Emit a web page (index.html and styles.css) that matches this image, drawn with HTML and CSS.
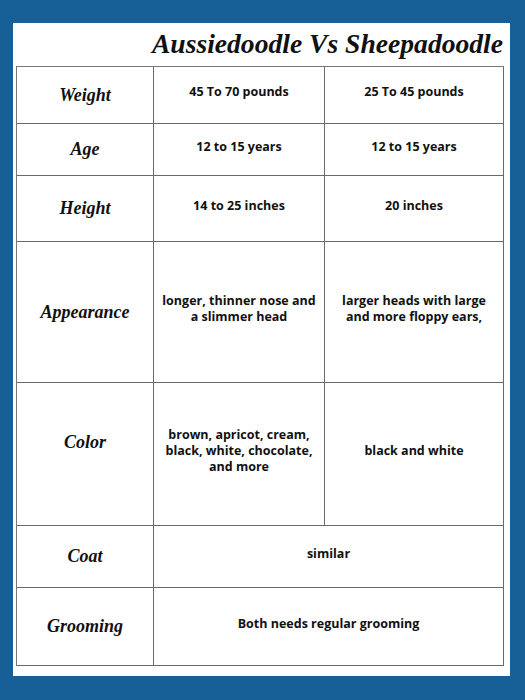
FILE: index.html
```html
<!DOCTYPE html>
<html>
<head>
<meta charset="utf-8">
<link rel="stylesheet" href="styles.css">
</head>
<body>
<div class="page">
  <h1 class="title">Aussiedoodle Vs Sheepadoodle</h1>
  <div class="table">
    <div class="cell label">Weight</div>
    <div class="cell value">45 To 70 pounds</div>
    <div class="cell value">25 To 45 pounds</div>

    <div class="cell label">Age</div>
    <div class="cell value">12 to 15 years</div>
    <div class="cell value">12 to 15 years</div>

    <div class="cell label">Height</div>
    <div class="cell value">14 to 25 inches</div>
    <div class="cell value">20 inches</div>

    <div class="cell label">Appearance</div>
    <div class="cell value">longer, thinner nose and<br>a slimmer head</div>
    <div class="cell value">larger heads with large<br>and more floppy ears,</div>

    <div class="cell label label--high">Color</div>
    <div class="cell value">brown, apricot, cream,<br>black, white, chocolate,<br>and more</div>
    <div class="cell value">black and white</div>

    <div class="cell label">Coat</div>
    <div class="cell value span">similar</div>

    <div class="cell label">Grooming</div>
    <div class="cell value span">Both needs regular grooming</div>
  </div>
</div>
</body>
</html>
```
FILE: styles.css
```css
html, body {
  margin: 0;
  padding: 0;
}
body {
  background: #165f97;
  width: 525px;
  height: 700px;
  overflow: hidden;
}
.page {
  margin: 23px 0 0 13px;
  width: 497px;
  height: 653px;
  background: #ffffff;
  box-sizing: border-box;
  padding-left: 3px;
}
.title {
  margin: 0;
  height: 43px;
  box-sizing: border-box;
  padding: 6px 7px 0 0;
  text-align: right;
  font-family: "Liberation Serif", serif;
  font-style: italic;
  font-weight: bold;
  font-size: 27.6px;
  line-height: 30px;
  color: #111;
}
.table {
  display: grid;
  grid-template-columns: 137px 171px 179px;
  grid-template-rows: 57px 52px 66px 141px 143px 62px 78px;
  width: 488px;
  box-sizing: border-box;
  border-top: 1px solid #777;
  border-left: 1px solid #777;
}
.cell {
  box-sizing: border-box;
  border-right: 1px solid #6a6a6a;
  border-bottom: 1px solid #6a6a6a;
  display: flex;
  align-items: center;
  justify-content: center;
  text-align: center;
  color: #111;
}
.label {
  font-family: "Liberation Serif", serif;
  font-style: italic;
  font-weight: bold;
  font-size: 18px;
}
.label--high {
  padding-bottom: 24px;
}
.value {
  font-family: "Open Sans", sans-serif;
  font-weight: 700;
  font-size: 12.5px;
  line-height: 16px;
  padding: 0 4px 6px;
}
.span {
  grid-column: span 2;
}
```
